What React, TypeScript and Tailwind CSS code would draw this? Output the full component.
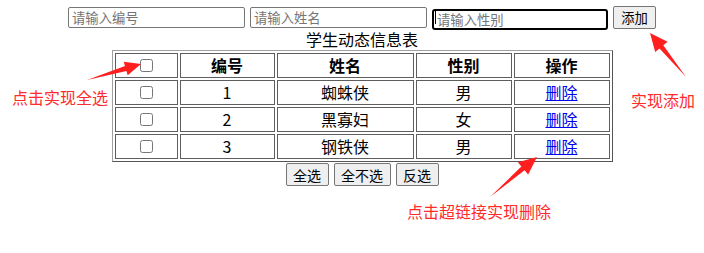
import React from "react";

const rows = [
  { id: 1, name: "蜘蛛侠", sex: "男" },
  { id: 2, name: "黑寡妇", sex: "女" },
  { id: 3, name: "钢铁侠", sex: "男" },
];

function Box() {
  return (
    <div className="flex h-[21px] items-center justify-center">
      <input type="checkbox" className="m-0 h-[13px] w-[13px]" />
    </div>
  );
}

export default function App() {
  const cell = "border border-[#5e5e5e] p-[1px] text-center align-middle";
  return (
    <div className="relative h-[253px] w-[704px] overflow-hidden bg-white font-['Noto_Sans_CJK_SC',sans-serif] text-black">
      <div className="flex flex-col items-center pl-[20px] pt-[6px]">
        <div className="flex h-[23px] items-center gap-[5px]">
          <input
            placeholder="请输入编号"
            className="h-[21px] w-[177px] rounded-[2px] border border-[#767676] px-[3px] font-['Noto_Sans_CJK_SC',sans-serif] text-[13.33px] outline-none placeholder:text-[#757575]"
          />
          <input
            placeholder="请输入姓名"
            className="h-[21px] w-[177px] rounded-[2px] border border-[#767676] px-[3px] font-['Noto_Sans_CJK_SC',sans-serif] text-[13.33px] outline-none placeholder:text-[#757575]"
          />
          <div className="relative">
            <input
              placeholder="请输入性别"
              className="h-[21px] w-[176px] rounded-[3px] border-2 border-black px-[3px] font-['Noto_Sans_CJK_SC',sans-serif] text-[13.33px] outline-none placeholder:text-[#757575]"
            />
            <span className="absolute left-[3px] top-[3px] h-[15px] w-[1px] bg-black" />
          </div>
          <button className="h-[23px] w-[43px] rounded-[2px] border border-[#767676] bg-[#efefef] text-[13.33px] leading-none">
            添加
          </button>
        </div>
        <div className="h-[21px] text-[16px] leading-[21px]">学生动态信息表</div>
        <table className="w-[501px] table-fixed border-separate border-spacing-[2px] border border-t-[#a0a0a0] border-l-[#a0a0a0] border-r-[#555] border-b-[#555] text-[16px] leading-[21px]">
          <thead>
            <tr>
              <th className={`${cell} w-[63px]`}>
                <Box />
              </th>
              <th className={`${cell} w-[95px] font-bold`}>编号</th>
              <th className={`${cell} w-[137px] font-bold`}>姓名</th>
              <th className={`${cell} w-[96px] font-bold`}>性别</th>
              <th className={`${cell} w-[96px] font-bold`}>操作</th>
            </tr>
          </thead>
          <tbody>
            {rows.map((r) => (
              <tr key={r.id}>
                <td className={cell}>
                  <Box />
                </td>
                <td className={cell}>{r.id}</td>
                <td className={cell}>{r.name}</td>
                <td className={cell}>{r.sex}</td>
                <td className={cell}>
                  <a href="#" className="text-[#0000ee] underline">
                    删除
                  </a>
                </td>
              </tr>
            ))}
          </tbody>
        </table>
        <div className="mt-[1px] flex items-center gap-[5px]">
          <button className="h-[23px] w-[43px] rounded-[2px] border border-[#767676] bg-[#efefef] text-[14px] leading-none">
            全选
          </button>
          <button className="h-[23px] w-[57px] rounded-[2px] border border-[#767676] bg-[#efefef] text-[14px] leading-none">
            全不选
          </button>
          <button className="h-[23px] w-[43px] rounded-[2px] border border-[#767676] bg-[#efefef] text-[14px] leading-none">
            反选
          </button>
        </div>
      </div>

      <div className="absolute left-[12px] top-[87px] text-[16px] leading-[21px] text-[#ff2a2a]">点击实现全选</div>
      <div className="absolute left-[631px] top-[90px] text-[16px] leading-[21px] text-[#ff2a2a]">实现添加</div>
      <div className="absolute left-[407px] top-[201px] text-[16px] leading-[21px] text-[#ff2a2a]">点击超链接实现删除</div>

      <svg className="pointer-events-none absolute left-0 top-0" width="704" height="253" viewBox="0 0 704 253">
        <polygon fill="#ff1f1f" points="87,80 125,66.1 123.7,61.8 141,64 127.7,75.2 126.4,70.9" />
        <polygon fill="#ff1f1f" points="686,77 659.5,48.5 655.2,52 650,33 667.6,41.8 663.3,45.3" />
        <polygon fill="#ff1f1f" points="490,197 521.4,166.5 517.8,162.3 537,157 528.2,174.5 524.6,170.3" />
      </svg>
    </div>
  );
}
